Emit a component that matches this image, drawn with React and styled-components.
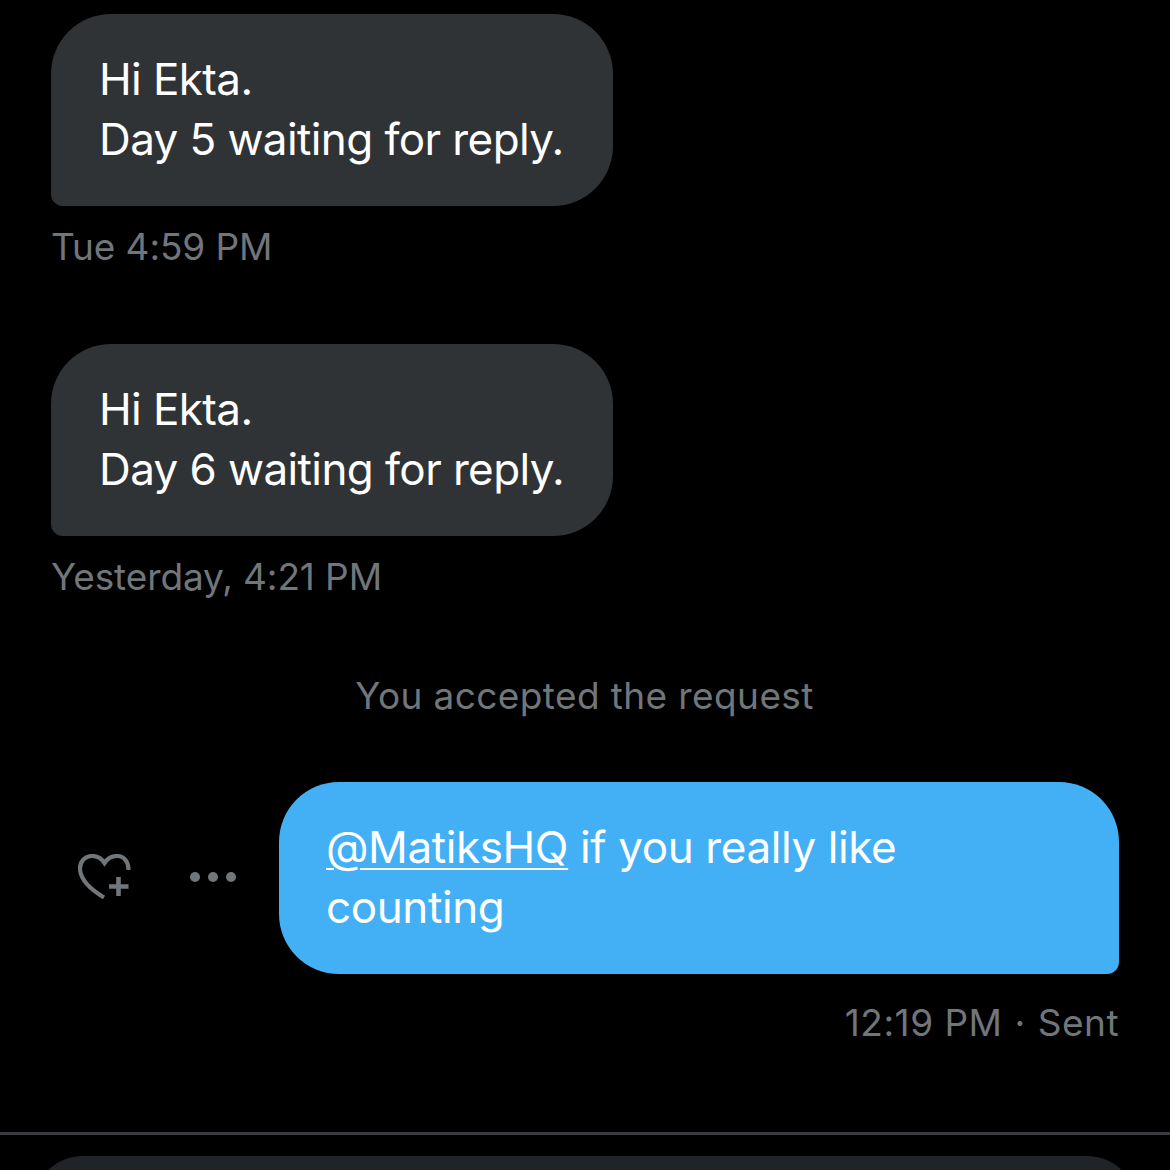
import React from "react";
import styled, { createGlobalStyle } from "styled-components";

const Global = createGlobalStyle`
  html, body { margin: 0; padding: 0; background: #000; height: 1170px; overflow: hidden; }
  * { box-sizing: border-box; }
`;

const Page = styled.div`
  width: 1170px;
  height: 1170px;
  overflow: hidden;
  background: #000;
  display: flex;
  flex-direction: column;
  font-family: Inter, "Liberation Sans", sans-serif;
`;

const Thread = styled.div`
  flex: none;
  height: 1132px;
  padding: 14px 51px 0;
  display: flex;
  flex-direction: column;
`;

const Received = styled.div`
  flex: none;
  width: 562px;
  height: 192px;
  padding: 35px 0 0 48px;
  background: #2f3336;
  border-radius: 60px 60px 60px 12px;
  color: #fff;
  font-size: 44px;
  line-height: 60px;
  letter-spacing: -0.6px;
`;

const Line = styled.div`
  white-space: nowrap;
`;

const Meta = styled.div`
  flex: none;
  height: 138px;
  padding-top: 18px;
  color: #71767b;
  font-size: 37px;
  line-height: 46px;
  letter-spacing: -0.1px;
  white-space: nowrap;
`;

const Notice = styled.div`
  flex: none;
  height: 108px;
  padding-right: 1px;
  margin-top: -1px;
  margin-bottom: 1px;
  color: #71767b;
  font-size: 37px;
  line-height: 46px;
  letter-spacing: 0.4px;
  text-align: center;
`;

const SentRow = styled.div`
  flex: none;
  display: flex;
  align-items: center;
  justify-content: flex-end;
  height: 192px;
`;

const Actions = styled.div`
  display: flex;
  align-items: center;
  gap: 58px;
  margin-right: 43px;
  margin-bottom: 2px;
  color: #71767b;
`;

const Sent = styled.div`
  width: 840px;
  height: 192px;
  padding: 35px 0 0 47px;
  background: #43b0f6;
  border-radius: 60px 60px 12px 60px;
  color: #fff;
  font-size: 44px;
  line-height: 60px;
  letter-spacing: -0.4px;
`;

const Mention = styled.span`
  text-decoration: underline;
  text-decoration-thickness: 2px;
  text-underline-offset: 5px;
`;

const SentMeta = styled.div`
  flex: none;
  padding-top: 26px;
  color: #71767b;
  font-size: 37px;
  line-height: 46px;
  letter-spacing: 0.5px;
  white-space: nowrap;
  text-align: right;
`;

const Dot = styled.span`
  margin: 0 12px;
`;

const Divider = styled.div`
  height: 3px;
  flex: none;
  background: #3a3c40;
`;

const Composer = styled.div`
  flex: none;
  height: 60px;
  margin: 21px 33px 0;
  background: #202327;
  border-radius: 50px 50px 0 0;
`;

const HeartPlus = () => (
  <svg width="54" height="46" viewBox="0 0 54 46" fill="none" stroke="currentColor" aria-hidden="true">
    <path
      d="M26 43.5 C15 37 3 28 2 15.5 C1.5 7 7.5 2 14 2 C19.5 2 23.5 4.5 26.5 9 C29.5 4.5 33.5 2 39 2 C46 2 50.5 7.5 50.5 16"
      strokeWidth="4.2"
    />
    <path d="M31 32.5 H50.5 M40.5 23 V42" strokeWidth="4.6" />
  </svg>
);

const More = () => (
  <svg width="46" height="12" viewBox="0 0 46 12" fill="currentColor" aria-hidden="true">
    <circle cx="5" cy="6" r="5" />
    <circle cx="23" cy="6" r="5" />
    <circle cx="41" cy="6" r="5" />
  </svg>
);

export default function App() {
  return (
    <Page>
      <Global />
      <Thread>
        <Received>
          <Line>Hi Ekta.</Line>
          <Line>Day 5 waiting for reply.</Line>
        </Received>
        <Meta>Tue 4:59 PM</Meta>
        <Received>
          <Line>Hi Ekta.</Line>
          <Line>Day 6 waiting for reply.</Line>
        </Received>
        <Meta>Yesterday, 4:21 PM</Meta>
        <Notice>You accepted the request</Notice>
        <SentRow>
          <Actions>
            <HeartPlus />
            <More />
          </Actions>
          <Sent>
            <Line>
              <Mention>@MatiksHQ</Mention> if you really like
            </Line>
            <Line>counting</Line>
          </Sent>
        </SentRow>
        <SentMeta>
          12:19 PM<Dot>·</Dot>Sent
        </SentMeta>
      </Thread>
      <Divider />
      <Composer />
    </Page>
  );
}
